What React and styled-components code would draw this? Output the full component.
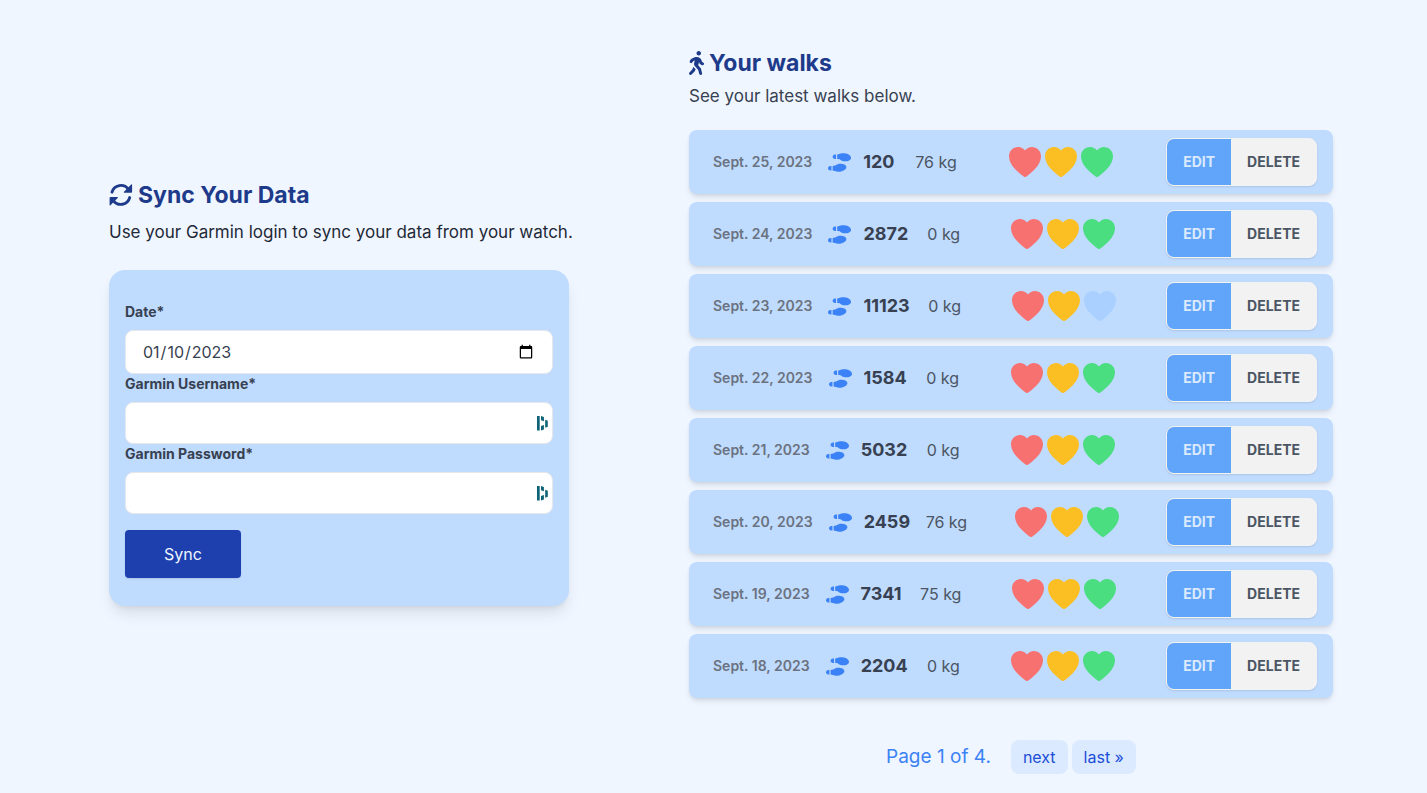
import React from "react";
import styled, { createGlobalStyle } from "styled-components";
import { FaShoePrints, FaWalking } from "react-icons/fa";

const GlobalStyle = createGlobalStyle`
  *, *::before, *::after { box-sizing: border-box; }
  body {
    margin: 0;
    background: #eff6ff;
    color: #1f2937;
    font-family: Inter, "Liberation Sans", sans-serif;
    font-size: 16px;
    line-height: 24px;
  }
  h1, h2, p, ul { margin: 0; padding: 0; }
  button, input { font: inherit; }
`;

const Page = styled.main`
  display: grid;
  grid-template-columns: minmax(0, 5fr) minmax(0, 7fr);
  column-gap: 120px;
  align-items: start;
  padding: 47px 94px 19px 109px;
`;

const SyncSection = styled.section`
  align-self: center;
  padding-bottom: 37px;
`;

const Title = styled.h1`
  display: flex;
  align-items: center;
  gap: 5px;
  color: #1e3a8a;
  font-size: 23px;
  font-weight: 700;
  line-height: 32px;
`;

const WalkerIcon = styled(FaWalking)`
  width: 15px;
  height: 24px;
`;

const Lead = styled.p`
  margin-top: ${(p) => (p.$gap ? "7px" : "3px")};
  color: ${(p) => (p.$muted ? "#374151" : "#1f2937")};
  font-size: 17px;
  line-height: 28px;
  white-space: nowrap;
`;

const SyncForm = styled.form`
  display: flex;
  flex-direction: column;
  margin-top: 24px;
  padding: 32px 16px 28px;
  border-radius: 16px;
  background: #bfdbfe;
  box-shadow: 0 10px 15px -3px rgba(0, 0, 0, 0.1), 0 4px 6px -4px rgba(0, 0, 0, 0.1);
`;

const Label = styled.label`
  margin-bottom: 8px;
  color: #374151;
  font-size: 14px;
  font-weight: 700;
  line-height: 20px;
`;

const Field = styled.div`
  display: flex;
  align-items: center;
  height: ${(p) => (p.$tall ? "44px" : "42px")};
  padding-right: ${(p) => (p.$tall ? "16px" : "3px")};
  border: 1px solid #e5e7eb;
  border-radius: 8px;
  background: #fff;
`;

const Input = styled.input`
  flex: 1;
  min-width: 0;
  padding: 8px 0 8px 16px;
  border: 0;
  outline: 0;
  background: transparent;
  color: #374151;
`;

const SyncButton = styled.button`
  align-self: flex-start;
  height: 48px;
  margin-top: 16px;
  padding: 0 39px;
  border: 0;
  border-radius: 4px;
  background: #1e40af;
  color: #eff6ff;
  box-shadow: 0 1px 2px rgba(0, 0, 0, 0.1);
`;

const WalkList = styled.ul`
  display: flex;
  flex-direction: column;
  gap: 8px;
  margin-top: 20px;
  list-style: none;
`;

const WalkRow = styled.li`
  display: flex;
  align-items: center;
  justify-content: space-between;
  height: 64px;
  padding: 8px 16px 8px 24px;
  border-radius: 8px;
  background: #bfdbfe;
  box-shadow: 0 4px 6px -1px rgba(0, 0, 0, 0.1), 0 2px 4px -2px rgba(0, 0, 0, 0.1);
`;

const Summary = styled.div`
  display: flex;
  align-items: center;
`;

const WalkDate = styled.span`
  margin-right: 16px;
  color: #6b7280;
  font-size: 14px;
  font-weight: 600;
`;

const Steps = styled.span`
  margin-left: 12px;
  color: #374151;
  font-size: 18px;
  font-weight: 700;
`;

const Weight = styled.span`
  color: #4b5563;
`;

const Hearts = styled.div`
  display: flex;
  gap: 4px;
  margin: 0 32px;
`;

const Actions = styled.div`
  display: flex;
  height: 48px;
  border: 1px solid #f2f2f2;
  border-radius: 8px;
  overflow: hidden;
  background: #f2f2f2;
  box-shadow: 0 1px 2px rgba(0, 0, 0, 0.1);
`;

const Action = styled.button`
  padding: 0 16px;
  border: 0;
  background: ${(p) => (p.$primary ? "#60a5fa" : "#f2f2f2")};
  color: ${(p) => (p.$primary ? "#dbeafe" : "#4b5563")};
  font-size: 14px;
  font-weight: 700;
`;

const Pager = styled.nav`
  display: flex;
  align-items: center;
  justify-content: center;
  gap: 4px;
  margin-top: 42px;
`;

const PageStatus = styled.span`
  margin-right: 16px;
  color: #3b82f6;
  font-size: 19px;
`;

const PageLink = styled.a`
  padding: 5px 12px;
  border-radius: 8px;
  background: #dbeafe;
  color: #1d4ed8;
  text-decoration: none;
`;

const HEART_COLORS = ["#f87171", "#fbbf24", "#4ade80"];

const walks = [
  { date: "Sept. 25, 2023", steps: 120, weight: 76, hearts: 3 },
  { date: "Sept. 24, 2023", steps: 2872, weight: 0, hearts: 3 },
  { date: "Sept. 23, 2023", steps: 11123, weight: 0, hearts: 2 },
  { date: "Sept. 22, 2023", steps: 1584, weight: 0, hearts: 3 },
  { date: "Sept. 21, 2023", steps: 5032, weight: 0, hearts: 3 },
  { date: "Sept. 20, 2023", steps: 2459, weight: 76, hearts: 3 },
  { date: "Sept. 19, 2023", steps: 7341, weight: 75, hearts: 3 },
  { date: "Sept. 18, 2023", steps: 2204, weight: 0, hearts: 3 },
];

function SyncIcon() {
  return (
    <svg width="24" height="24" viewBox="0 0 24 24" aria-hidden="true">
      <g fill="none" stroke="currentColor" strokeWidth="2.9" strokeLinecap="round">
        <path d="M3 9.200A9.200 9.200 0 0 1 19.300 6.200" />
        <path d="M20.700 14.600A9.200 9.200 0 0 1 4.400 17.600" />
      </g>
      <path
        d="M22.200 1.600q.900-.700.900.500v6.700q0 .900-.900.900h-6.700q-1.300 0-.500-.900zM1.500 22.200q-.900.700-.900-.500V15q0-.900.900-.900h6.700q1.300 0 .500.900z"
        fill="currentColor"
      />
    </svg>
  );
}

function PasswordManagerIcon() {
  return (
    <svg width="13" height="16" viewBox="0 0 13 16" fill="#0e6377" aria-hidden="true">
      <path d="M1 1h2.700v14.500H1zM5 1l2.900 1v4.300L5 5.300zM5 11l2.900-1v4.500L5 15.500zM9.200 4.700l2.600 1v6l-2.600 1z" />
    </svg>
  );
}

function Heart({ color }) {
  return (
    <svg width="32" height="32" viewBox="0 0 32 32" fill={color} aria-hidden="true">
      <path d="M16 4.500C14.300 2.200 11.900 1 9.200 1 4 1 0 5 0 10.300c0 4.500 2.300 8.700 6 12.700 2.600 2.900 5.700 5.400 9 7.700q1 .600 2 0c3.300-2.300 6.400-4.800 9-7.700 3.700-4 6-8.200 6-12.700C32 5 28 1 22.800 1c-2.700 0-5.100 1.200-6.800 3.500z" />
    </svg>
  );
}

function Walk({ walk }) {
  return (
    <WalkRow>
      <Summary>
        <WalkDate>{walk.date}</WalkDate>
        <FaShoePrints size={23} color="#3b82f6" />
        <Steps>{walk.steps}</Steps>
      </Summary>
      <Weight>{walk.weight} kg</Weight>
      <Hearts>
        {HEART_COLORS.map((color, i) => (
          <Heart key={color} color={i < walk.hearts ? color : "#a9d0fe"} />
        ))}
      </Hearts>
      <Actions>
        <Action type="button" $primary>EDIT</Action>
        <Action type="button">DELETE</Action>
      </Actions>
    </WalkRow>
  );
}

export default function App() {
  return (
    <>
      <GlobalStyle />
      <Page>
        <SyncSection>
          <Title><SyncIcon />Sync Your Data</Title>
          <Lead $gap>Use your Garmin login to sync your data from your watch.</Lead>
          <SyncForm onSubmit={(e) => e.preventDefault()}>
            <Label htmlFor="date">Date*</Label>
            <Field $tall>
              <Input id="date" type="date" defaultValue="2023-01-10" />
            </Field>
            <Label htmlFor="username">Garmin Username*</Label>
            <Field>
              <Input id="username" type="text" />
              <PasswordManagerIcon />
            </Field>
            <Label htmlFor="password">Garmin Password*</Label>
            <Field>
              <Input id="password" type="password" />
              <PasswordManagerIcon />
            </Field>
            <SyncButton type="submit">Sync</SyncButton>
          </SyncForm>
        </SyncSection>
        <section>
          <Title as="h2"><WalkerIcon />Your walks</Title>
          <Lead $muted>See your latest walks below.</Lead>
          <WalkList>
            {walks.map((walk) => <Walk key={walk.date} walk={walk} />)}
          </WalkList>
          <Pager aria-label="Pagination">
            <PageStatus>Page 1 of 4.</PageStatus>
            <PageLink href="#next">next</PageLink>
            <PageLink href="#last">last »</PageLink>
          </Pager>
        </section>
      </Page>
    </>
  );
}
